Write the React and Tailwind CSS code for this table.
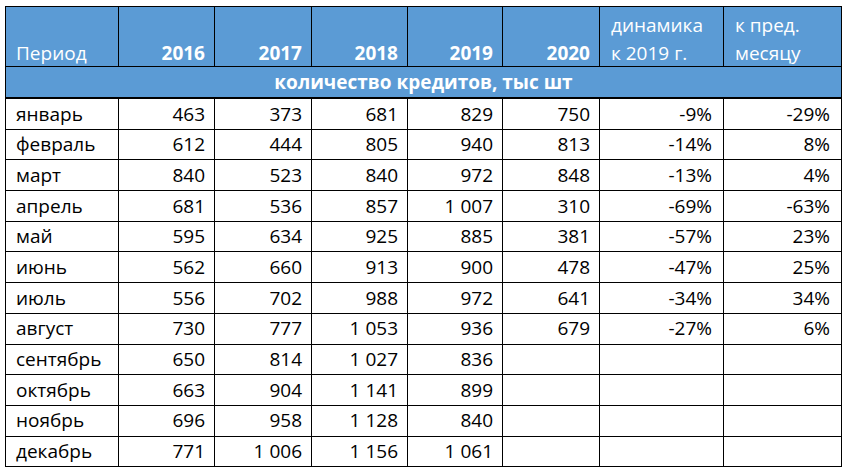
import React from "react";

const cols = "grid grid-cols-[113px_96px_97px_96px_95px_97px_124px_118px]";

const rows = [
  ["январь", "463", "373", "681", "829", "750", "-9%", "-29%"],
  ["февраль", "612", "444", "805", "940", "813", "-14%", "8%"],
  ["март", "840", "523", "840", "972", "848", "-13%", "4%"],
  ["апрель", "681", "536", "857", "1 007", "310", "-69%", "-63%"],
  ["май", "595", "634", "925", "885", "381", "-57%", "23%"],
  ["июнь", "562", "660", "913", "900", "478", "-47%", "25%"],
  ["июль", "556", "702", "988", "972", "641", "-34%", "34%"],
  ["август", "730", "777", "1 053", "936", "679", "-27%", "6%"],
  ["сентябрь", "650", "814", "1 027", "836", "", "", ""],
  ["октябрь", "663", "904", "1 141", "899", "", "", ""],
  ["ноябрь", "696", "958", "1 128", "840", "", "", ""],
  ["декабрь", "771", "1 006", "1 156", "1 061", "", "", ""],
];

const years = ["2016", "2017", "2018", "2019", "2020"];

export default function App() {
  return (
    <div className="min-h-[473px] w-[846px] bg-white pl-[5px] pt-[6px] font-['Open_Sans',sans-serif] text-[19px] text-black">
      <div className="w-[837px] border-l border-t border-black">
        {/* header */}
        <div className={`${cols} h-[60px] bg-[#5b9bd5] text-white`}>
          <div className="flex items-end border-b border-r border-black pl-[10px] leading-[26px]">
            Период
          </div>
          {years.map((y) => (
            <div
              key={y}
              className="flex items-end justify-end border-b border-r border-black pr-[9px] font-bold leading-[26px]"
            >
              {y}
            </div>
          ))}
          <div className="flex flex-col justify-end border-b border-r border-black pl-[11px] leading-[30px]">
            <span>динамика</span>
            <span className="leading-[26px]">к 2019 г.</span>
          </div>
          <div className="flex flex-col justify-end border-b border-r border-black pl-[11px] leading-[30px]">
            <span>к пред.</span>
            <span className="leading-[26px]">месяцу</span>
          </div>
        </div>

        {/* section band */}
        <div className="flex h-[32px] items-center justify-center border-b-2 border-r border-black bg-[#5b9bd5] font-bold text-white">
          количество кредитов, тыс шт
        </div>

        {/* data */}
        {rows.map((r) => (
          <div key={r[0]} className={`${cols} h-[30.7px]`}>
            {r.map((c, i) => (
              <div
                key={i}
                className={`flex items-center border-b border-r border-black ${
                  i === 0 ? "pl-[10px]" : "justify-end pr-[9px]"
                } ${i >= 6 ? "pr-[11px]" : ""}`}
              >
                {c}
              </div>
            ))}
          </div>
        ))}
      </div>
    </div>
  );
}
